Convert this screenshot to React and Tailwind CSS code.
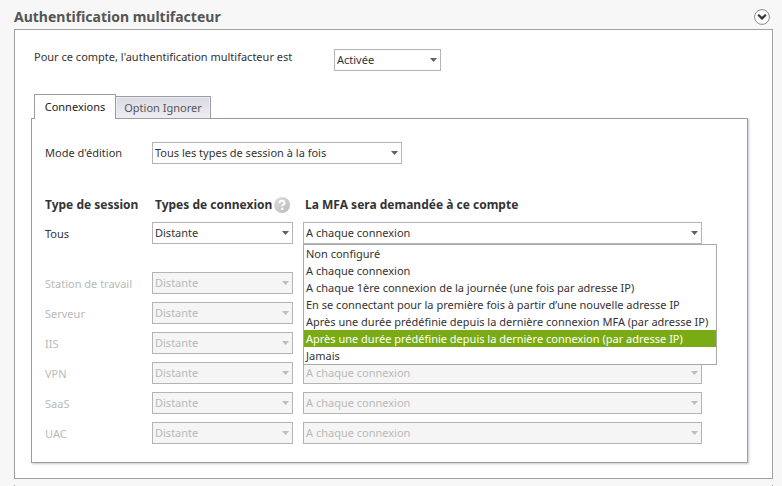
import React, { useState } from "react";
import { clsx } from "clsx";

const SESSION_TYPES = ["Station de travail", "Serveur", "IIS", "VPN", "SaaS", "UAC"];

const MFA_OPTIONS = [
  "Non configuré",
  "A chaque connexion",
  "A chaque 1ère connexion de la journée (une fois par adresse IP)",
  "En se connectant pour la première fois à partir d’une nouvelle adresse IP",
  "Après une durée prédéfinie depuis la dernière connexion MFA (par adresse IP)",
  "Après une durée prédéfinie depuis la dernière connexion (par adresse IP)",
  "Jamais",
];

const Select = ({ className, options, disabled, ...props }) => (
  <div className={clsx("relative", className)}>
    <select
      disabled={disabled}
      className={clsx(
        "block w-full h-[22px] appearance-none border border-[#b4b4b4] pl-0.5 pr-4 outline-none",
        disabled ? "bg-[#f5f5f5] text-[#b9b9b9] opacity-100" : "bg-white text-[#333]"
      )}
      {...props}
    >
      {options.map((option) => (
        <option key={option}>{option}</option>
      ))}
    </select>
    <svg
      viewBox="0 0 7 4"
      className={clsx(
        "absolute right-1 top-[9px] w-[7px] h-1 pointer-events-none",
        disabled ? "text-[#bdbdbd]" : "text-[#606060]"
      )}
    >
      <path d="M0 0h7L3.5 4z" fill="currentColor" />
    </svg>
  </div>
);

const HelpIcon = () => (
  <svg viewBox="0 0 16 16" className="w-4 h-4">
    <defs>
      <linearGradient id="help" x1="0" y1="0" x2="1" y2="1">
        <stop offset="0" stopColor="#e0e0e0" />
        <stop offset="1" stopColor="#b8b8b8" />
      </linearGradient>
    </defs>
    <circle cx="8" cy="8" r="8" fill="url(#help)" />
    <path d="M5.5 6.2C5.5 4.6 6.6 3.8 8 3.8s2.5.8 2.5 2.1c0 1.6-2.3 1.7-2.3 3.3" fill="none" stroke="#fff" strokeWidth="1.9" />
    <circle cx="8.2" cy="11.7" r="1.2" fill="#fff" />
  </svg>
);

const SessionTable = () => {
  const [highlighted, setHighlighted] = useState(5);
  const [mfa, setMfa] = useState("A chaque connexion");
  const [open, setOpen] = useState(true);

  const pick = (option) => {
    setMfa(option);
    setOpen(false);
  };

  return (
    <table className="w-full table-fixed mt-7 text-left">
      <thead>
        <tr className="h-[26px] text-[12px] text-[#333]">
          <th className="w-[107px] p-0 font-bold whitespace-nowrap">Type de session</th>
          <th className="w-[151px] p-0 pl-[3px] font-bold">
            <div className="flex items-center gap-0.5 whitespace-nowrap">
              Types de connexion
              <button type="button" aria-label="Aide">
                <HelpIcon />
              </button>
            </div>
          </th>
          <th className="p-0 pl-0.5 font-bold">La MFA sera demandée à ce compte</th>
        </tr>
      </thead>
      <tbody>
        <tr className="h-[50px] align-top">
          <td className="pt-1 leading-6">Tous</td>
          <td className="pt-1 pr-2.5">
            <Select aria-label="Types de connexion, Tous" options={["Distante", "Locale"]} />
          </td>
          <td className="pt-1">
            <div className="relative">
              <Select
                aria-label="Demande MFA, Tous"
                options={MFA_OPTIONS}
                value={mfa}
                onChange={(e) => pick(e.target.value)}
              />
              {open && (
                <ul
                  role="listbox"
                  className="absolute left-0 top-full z-10 min-w-full border border-[#a8a8a8] bg-white leading-[17px] whitespace-nowrap"
                >
                  {MFA_OPTIONS.map((option, i) => (
                    <li
                      key={option}
                      role="option"
                      aria-selected={i === highlighted}
                      onMouseEnter={() => setHighlighted(i)}
                      onClick={() => pick(option)}
                      className={clsx("pl-0.5 pr-2 cursor-default", i === highlighted && "bg-[#7aab14] text-white")}
                    >
                      {option}
                    </li>
                  ))}
                </ul>
              )}
            </div>
          </td>
        </tr>
        {SESSION_TYPES.map((type) => (
          <tr key={type} className="h-[30px] text-[#b9b9b9]">
            <td className="p-0 pt-0.5">{type}</td>
            <td className="p-0 pr-2.5">
              <Select disabled aria-label={`Types de connexion, ${type}`} options={["Distante"]} />
            </td>
            <td className="p-0">
              <Select disabled aria-label={`Demande MFA, ${type}`} options={["A chaque connexion"]} />
            </td>
          </tr>
        ))}
      </tbody>
    </table>
  );
};

const App = () => {
  const [tab, setTab] = useState("connexions");

  return (
    <main className="min-h-screen bg-[#f7f7f7] pl-3.5 pr-[9px] font-['Noto_Sans','Open_Sans',sans-serif] text-[11px] leading-4 text-[#333]">
      <header className="flex h-[29px] items-center justify-between pt-1 pr-[3px]">
        <h1 className="text-[14px] font-bold text-[#555]">Authentification multifacteur</h1>
        <button type="button" aria-label="Replier la section">
          <svg viewBox="0 0 16 16" className="w-4 h-4">
            <circle cx="8" cy="8" r="7.4" fill="#fff" stroke="#8a8a8a" />
            <path d="M4.2 5.8L8 9.4l3.8-3.6" fill="none" stroke="#333" strokeWidth="2.2" />
          </svg>
        </button>
      </header>

      <section className="border border-[#a0a0a0] bg-white pl-4 pr-6 pb-[15px]">
        <div className="flex items-start pt-[19px] pl-[3px]">
          <label htmlFor="mfa-state" className="w-[300px] whitespace-nowrap">
            Pour ce compte, l'authentification multifacteur est
          </label>
          <Select id="mfa-state" className="w-[107px]" options={["Activée", "Désactivée"]} />
        </div>

        <div role="tablist" className="mt-[23px] flex items-end pl-[3px]">
          <button
            type="button"
            role="tab"
            aria-selected={tab === "connexions"}
            onClick={() => setTab("connexions")}
            className="relative z-10 -mb-px h-[25px] w-[82px] border border-b-0 border-[#9c9ca8] bg-white text-[#222]"
          >
            Connexions
          </button>
          <button
            type="button"
            role="tab"
            aria-selected={tab === "ignorer"}
            onClick={() => setTab("ignorer")}
            className="-ml-px h-[22px] w-24 border border-b-0 border-[#9c9ca8] bg-linear-to-b from-[#d9d9e0] to-[#ededf2] text-[#555] inset-ring inset-ring-[#ececf2]"
          >
            Option Ignorer
          </button>
        </div>

        <div
          role="tabpanel"
          className="border border-[#9c9ca4] bg-white pt-[23px] pb-3.5 pl-[13px] pr-[45px] shadow-[1px_1px_2px_#c8c8d0]"
        >
          <div className="flex items-center">
            <label htmlFor="edit-mode" className="w-[107px]">
              Mode d'édition
            </label>
            <Select
              id="edit-mode"
              className="w-[250px]"
              options={["Tous les types de session à la fois", "Chaque type de session"]}
            />
          </div>
          <SessionTable />
        </div>
      </section>

      <section className="mt-1.5 h-px border-x border-[#a0a0a0]" />
    </main>
  );
};

export default App;
